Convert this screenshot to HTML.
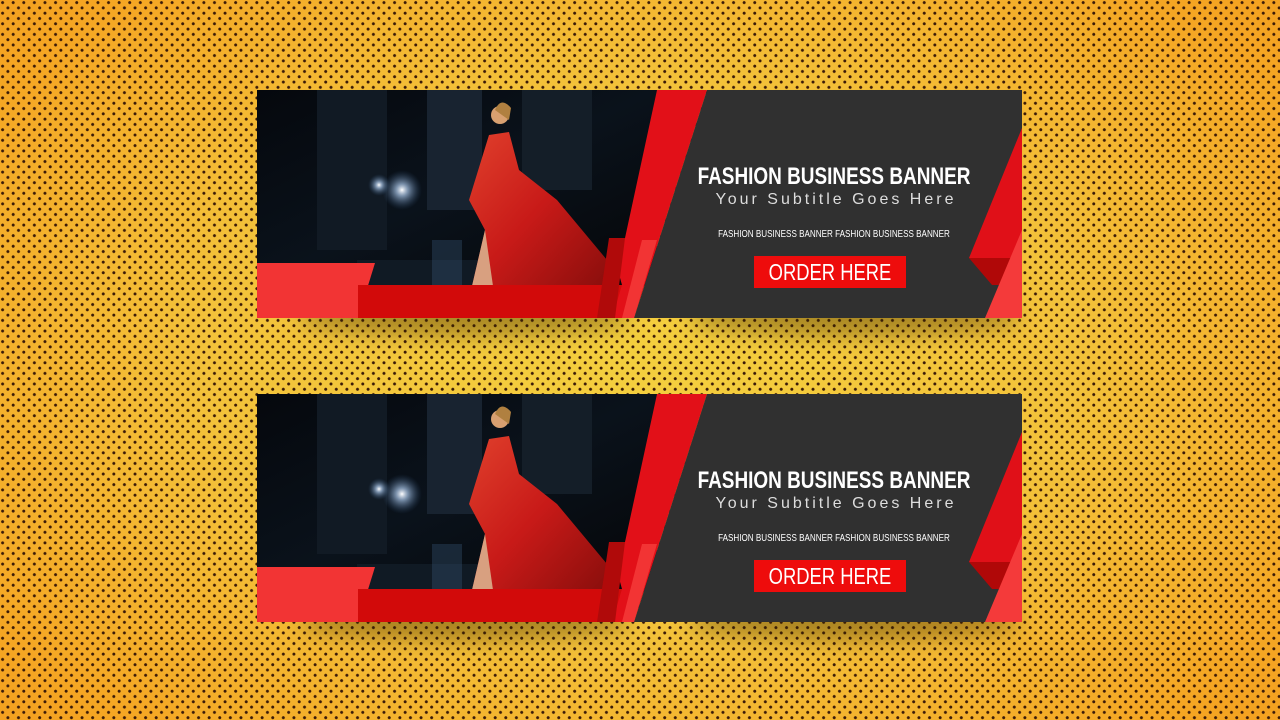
<!DOCTYPE html>
<html><head><meta charset="utf-8"><style>
html,body{margin:0;padding:0}
body{width:1280px;height:720px;overflow:hidden;position:relative;
background:
radial-gradient(circle at 2.6px 2.6px,#3a1a08 1.3px,transparent 1.7px) 0 0/10.6px 10.6px,
radial-gradient(circle at 7.9px 7.9px,#3a1a08 1.3px,transparent 1.7px) 0 0/10.6px 10.6px,
radial-gradient(ellipse 75% 85% at 50% 50%,#f4cf3e 0%,#f3c23a 45%,#f5a623 80%,#f39a1c 100%);}
.sh{position:absolute;width:330px;height:36px;border-radius:50%;background:rgba(60,40,0,.4);filter:blur(10px)}
.b{position:absolute;left:257px;width:765px;height:228px}
.t{position:absolute;left:177px;width:800px;font-family:"Liberation Sans",sans-serif;color:#fff;text-align:center;white-space:nowrap;transform-origin:center}
</style></head><body>
<div class="sh" style="left:300px;top:300px"></div>
<div class="sh" style="left:690px;top:300px"></div>
<div class="sh" style="left:300px;top:604px"></div>
<div class="sh" style="left:690px;top:604px"></div>

<div class="b" style="top:90px">
<svg width="765" height="228" viewBox="0 0 765 228">
<defs>
<linearGradient id="city" x1="0" y1="0" x2="1" y2="1"><stop offset="0" stop-color="#05080d"/><stop offset=".5" stop-color="#0a121b"/><stop offset="1" stop-color="#050608"/></linearGradient>
<radialGradient id="glow"><stop offset="0" stop-color="#fff"/><stop offset=".3" stop-color="#aac6e8" stop-opacity=".7"/><stop offset="1" stop-color="#2a4a70" stop-opacity="0"/></radialGradient>
<linearGradient id="dress" x1="0" y1="0" x2="1" y2="1"><stop offset="0" stop-color="#e0402c"/><stop offset=".5" stop-color="#c81a18"/><stop offset="1" stop-color="#8a0e0c"/></linearGradient>
<g id="ban">
<rect width="400" height="196" fill="url(#city)"/>
<rect x="60" y="0" width="70" height="160" fill="#111a24"/>
<rect x="170" y="0" width="55" height="120" fill="#182330"/>
<rect x="265" y="0" width="70" height="100" fill="#141e28"/>
<rect x="100" y="170" width="200" height="26" fill="#101a24"/>
<circle cx="145" cy="100" r="20" fill="url(#glow)"/>
<circle cx="122" cy="95" r="11" fill="url(#glow)"/>
<rect x="175" y="150" width="30" height="45" fill="#3a5a78" opacity=".35"/>
<circle cx="243" cy="25" r="9" fill="#d8a070"/>
<path d="M238 20 q6 -14 16 -2 l-2 12z" fill="#b08040"/>
<path d="M232 45 L252 42 L262 80 L300 110 L350 170 L348 196 L215 196 L228 140 L212 110 Z" fill="url(#dress)"/>
<path d="M215 196 L228 140 L236 196Z" fill="#d8a080"/>
<path d="M0 173 L118 173 L101 228 L0 228Z" fill="#f23434"/>
<path d="M101 195 L370 195 L365 228 L101 228Z" fill="#d20a0a"/>
<path d="M400 0 L450 0 L377 228 L355 228 L365 195 L352 148 L368 148Z" fill="#e21018"/>
<path d="M352 148 L368 148 L358 228 L340 228Z" fill="#b00a0a"/>
<path d="M450 0 L765 0 L765 228 L377 228Z" fill="#303030"/>
<path d="M365 228 L377 228 L400 150 L385 150Z" fill="#f23434"/>
<path d="M765 38 L712 168 L765 168Z" fill="#e01018"/>
<path d="M712 168 L765 168 L765 195 L735 195Z" fill="#b00808"/>
<path d="M728 228 L765 140 L765 228Z" fill="#f43a3a"/>
<rect x="497" y="166" width="152" height="32" fill="#ee0c0c"/>
</g>
</defs>
<use href="#ban"/>
</svg>
<div class="t" style="top:73px;font-size:24px;font-weight:bold;transform:scaleX(.79)">FASHION BUSINESS BANNER</div>
<div class="t" style="top:101px;font-size:16px;letter-spacing:3px;color:#ddd;left:179px">Your Subtitle Goes Here</div>
<div class="t" style="top:139px;font-size:10px;transform:scaleX(.81)">FASHION BUSINESS BANNER FASHION BUSINESS BANNER</div>
<div class="t" style="top:169px;font-size:23px;left:173px;transform:scaleX(.8)">ORDER HERE</div>
</div>

<div class="b" style="top:394px">
<svg width="765" height="228" viewBox="0 0 765 228"><use href="#ban"/></svg>
<div class="t" style="top:73px;font-size:24px;font-weight:bold;transform:scaleX(.79)">FASHION BUSINESS BANNER</div>
<div class="t" style="top:101px;font-size:16px;letter-spacing:3px;color:#ddd;left:179px">Your Subtitle Goes Here</div>
<div class="t" style="top:139px;font-size:10px;transform:scaleX(.81)">FASHION BUSINESS BANNER FASHION BUSINESS BANNER</div>
<div class="t" style="top:169px;font-size:23px;left:173px;transform:scaleX(.8)">ORDER HERE</div>
</div>
</body></html>
